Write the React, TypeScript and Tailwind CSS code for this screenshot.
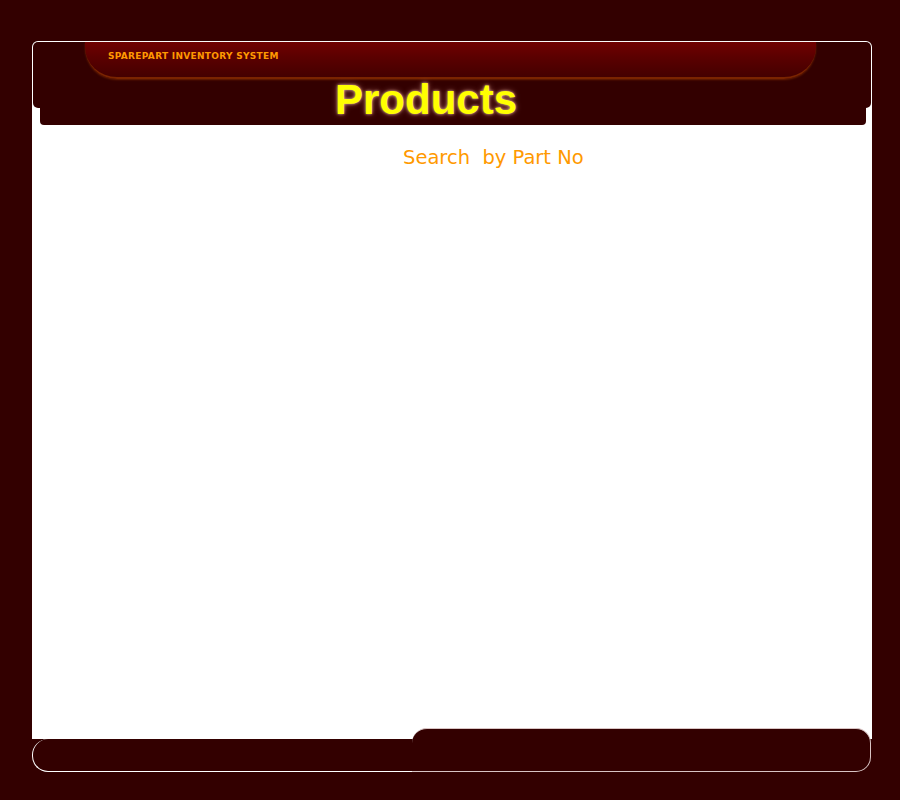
export default function App() {
  return (
    <div className="min-h-[800px] bg-[#330000] pt-[41px] pl-[32px]">
      <div className="w-[840px] flex flex-col">
        {/* main white panel */}
        <div className="h-[698px] bg-white rounded-t-[6px] flex flex-col">
          {/* header */}
          <div className="mx-px mt-px flex flex-col">
            <div className="h-[66px] bg-[#330000] rounded-[5px] flex flex-col">
              <div className="shrink-0 ml-[52px] w-[731px] h-[37px] rounded-b-[32px] border-b-2 border-[#7a2400] bg-[linear-gradient(to_bottom,#700000,#5a0000_45%,#440000)] shadow-[0_1px_2px_rgba(160,60,0,0.5)]">
                <div className="pl-[23px] pt-[8px] font-['DejaVu_Sans',sans-serif] text-[9px] font-bold leading-[12px] text-[#ff9900] tracking-[0.3px]">
                  SPAREPART INVENTORY SYSTEM
                </div>
              </div>
              <div className="shrink-0 relative z-10 ml-[302px] font-['Liberation_Sans',Arial,sans-serif] text-[42px] font-bold leading-none text-[#ffff00] [text-shadow:0_0_3px_rgba(255,210,180,0.85),0_0_6px_rgba(255,180,170,0.45)]">
                Products
              </div>
            </div>
            <div className="ml-[7px] mr-[5px] h-[17px] bg-[#330000] rounded-b-[4px]" />
          </div>

          {/* search label */}
          <div className="ml-[371px] mt-[22px] font-['DejaVu_Sans',sans-serif] text-[19.5px] leading-[22px] text-[#ff9900] whitespace-pre">
            {"Search  by Part No"}
          </div>
        </div>

        {/* footer bars */}
        <div className="-mt-[11px] flex items-start">
          <div className="mt-[11px] w-[398px] h-[33px] rounded-l-[16px] border-l border-b border-white bg-[#330000]" />
          <div className="-ml-[18px] flex-1 mr-px h-[44px] rounded-tl-[15px] rounded-r-[15px] border-t border-r border-b border-[#d8c4c4] bg-[#330000]" />
        </div>
      </div>
    </div>
  )
}
